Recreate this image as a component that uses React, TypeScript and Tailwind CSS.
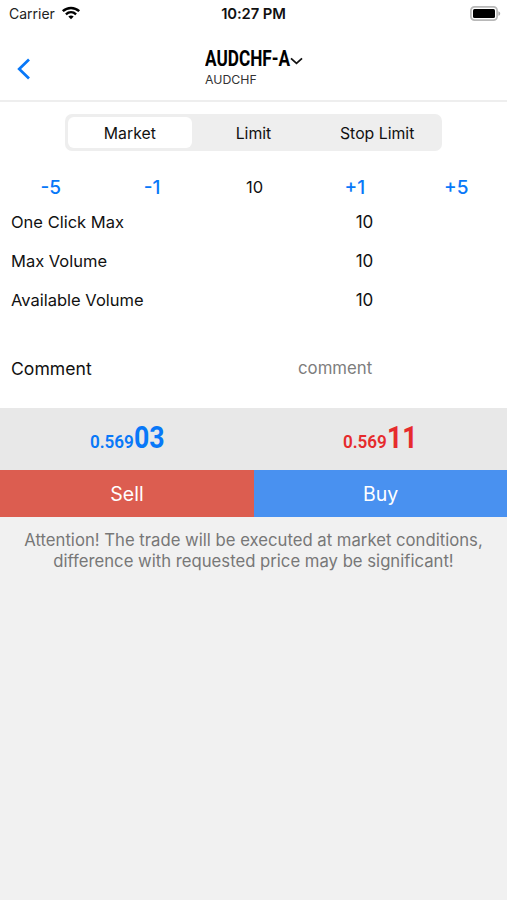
const limits = ["One Click Max", "Max Volume", "Available Volume"];

function Price({ small, big, color }: { small: string; big: string; color: string }) {
  return (
    <div className={`flex flex-1 items-baseline justify-center font-['Roboto',sans-serif] leading-none ${color}`}>
      <span className="flex w-[44px] justify-end">
        <span className="shrink-0 origin-right scale-x-[0.9] text-[19px] font-semibold">{small}</span>
      </span>
      <span className="flex w-[30px]">
        <span className="shrink-0 origin-left scale-x-[0.86] text-[31px] font-bold">{big}</span>
      </span>
    </div>
  );
}

export default function App() {
  return (
    <div className="flex h-[900px] w-[507px] flex-col overflow-hidden bg-[#f1f1f1] font-['Inter',sans-serif] text-[#111111]">
      <div className="flex h-[408px] flex-col bg-white">
        <div className="grid h-7 grid-cols-3 items-center text-[14px] leading-7">
          <div className="flex items-center gap-[6px] pl-[9px]">
            <span className="text-[#222222]">Carrier</span>
            <svg className="-mt-[2px]" width="20" height="14" viewBox="0 0 20 14" fill="none" stroke="#000">
              <path d="M1.8 5.1C6.5.8 13.5.8 18.2 5.1" strokeWidth="2.5" />
              <path d="M4.9 8.3C7.9 5.6 12.1 5.6 15.1 8.3" strokeWidth="2.4" />
              <path d="M7.3 10.4c1.7-1.3 3.7-1.3 5.4 0L10 13.2Z" fill="#000" stroke="none" />
            </svg>
          </div>
          <span className="text-center text-[14.8px] font-semibold tracking-[-0.1px]">10:27 PM</span>
          <div className="flex justify-end pr-[6px]">
            <svg className="-mt-[2px]" width="31" height="15" viewBox="0 0 31 15" fill="none">
              <rect x=".9" y=".9" width="26.2" height="13.2" rx="3.6" stroke="#b8b8b8" strokeWidth="1.7" />
              <rect x="3" y="3" width="22" height="9" rx="1.5" fill="#000" />
              <path d="M28.4 5.2c2.4.8 2.4 3.8 0 4.6Z" fill="#aaa" />
            </svg>
          </div>
        </div>
        <header className="flex h-[74px] border-b-2 border-[#eeeeee]">
          <div className="w-[205px] pl-[17px] pt-[30px]">
            <svg width="14" height="22" viewBox="0 0 14 22" fill="none" stroke="#0878f8" strokeWidth="2.7">
              <path d="M12 1.5 2.2 11 12 20.5" />
            </svg>
          </div>
          <div className="pt-[18px]">
            <div className="flex h-[26px] items-center">
              <span className="flex w-[85px]">
                <span className="shrink-0 origin-left scale-x-[0.8] font-['Roboto',sans-serif] text-[21.5px] font-bold leading-[26px] text-black">AUDCHF-A</span>
              </span>
              <svg className="mt-[3px]" width="13" height="8" viewBox="0 0 13 8" fill="none" stroke="#111" strokeWidth="1.8">
                <path d="m1 1.3 5.5 5 5.5-5" />
              </svg>
            </div>
            <div className="text-[12.3px] leading-[15px] text-[#333333]">AUDCHF</div>
          </div>
        </header>
        <div className="mx-[65px] mt-3 grid h-[37px] w-[377px] grid-cols-3 rounded-[7px] bg-[#eeeeee] p-[3px] text-center text-[15.8px] leading-[33px]">
          <div className="h-[31px] rounded-[6px] bg-white">Market</div>
          <div>Limit</div>
          <div>Stop Limit</div>
        </div>
        <div className="mt-[19px] grid h-9 grid-cols-5 text-center text-[19px] font-medium leading-9 text-[#0878f8]">
          <span>-5</span>
          <span>-1</span>
          <span className="pl-[2px] text-[16.5px] font-normal leading-[35px] text-[#111111]">10</span>
          <span>+1</span>
          <span>+5</span>
        </div>
        <div className="-mt-[4px] flex flex-col text-[16.5px]">
          {limits.map((label) => (
            <div key={label} className="flex h-[39px] items-center pl-[11px]">
              <span className="w-[218px] leading-[26px]">{label}</span>
              <span className="w-[271px] text-center text-[17px] leading-[26px]">10</span>
            </div>
          ))}
        </div>
        <div className="mt-[30px] flex h-10 items-center pl-[11px]">
          <span className="w-[287px] text-[17.6px]">Comment</span>
          <span className="text-[16.8px] text-[#7d7d7d]">comment</span>
        </div>
      </div>
      <div className="flex h-[62px] bg-[#e8e8e8] pt-[14px]">
        <Price small="0.569" big="03" color="text-[#0878f8]" />
        <Price small="0.569" big="11" color="text-[#e62b2d]" />
      </div>
      <div className="flex h-[47px] text-center text-[19.5px] leading-[48px] text-white">
        <div className="w-[254px] bg-[#dc5d50]">Sell</div>
        <div className="flex-1 bg-[#4991f0]">Buy</div>
      </div>
      <p className="pt-[13px] text-center text-[16.7px] leading-[21px] text-[#777777]">
        Attention! The trade will be executed at market conditions,
        <br />
        difference with requested price may be significant!
      </p>
    </div>
  );
}
